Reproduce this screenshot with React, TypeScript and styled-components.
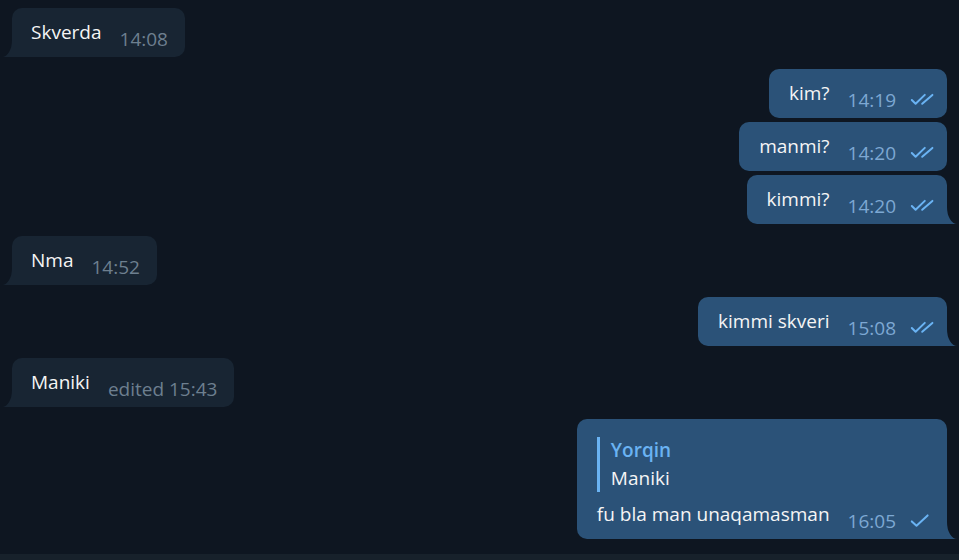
import React from 'react';
import styled, { createGlobalStyle, css } from 'styled-components';

const GlobalStyle = createGlobalStyle`
  html, body, #root {
    margin: 0;
    padding: 0;
    height: 100%;
  }
  body {
    background: #0e1621;
    font-family: "Open Sans", "Noto Sans", sans-serif;
    color: #f5f5f5;
    overflow: hidden;
  }
`;

type Side = 'in' | 'out';
type Status = 'read' | 'sent';

interface Message {
  id: number;
  side: Side;
  text: string;
  time: string;
  edited?: boolean;
  status?: Status;
  reply?: { name: string; text: string };
}

const groups: Message[][] = [
  [{ id: 1, side: 'in', text: 'Skverda', time: '14:08' }],
  [
    { id: 2, side: 'out', text: 'kim?', time: '14:19', status: 'read' },
    { id: 3, side: 'out', text: 'manmi?', time: '14:20', status: 'read' },
    { id: 4, side: 'out', text: 'kimmi?', time: '14:20', status: 'read' },
  ],
  [{ id: 5, side: 'in', text: 'Nma', time: '14:52' }],
  [{ id: 6, side: 'out', text: 'kimmi skveri', time: '15:08', status: 'read' }],
  [{ id: 7, side: 'in', text: 'Maniki', time: '15:43', edited: true }],
  [
    {
      id: 8,
      side: 'out',
      text: 'fu bla man unaqamasman',
      time: '16:05',
      status: 'sent',
      reply: { name: 'Yorqin', text: 'Maniki' },
    },
  ],
];

const colors = {
  inBubble: '#182533',
  outBubble: '#2b5278',
  inTime: '#6d7f8f',
  outTime: '#7da8d3',
  accent: '#6ab3f3',
};

const Layout = styled.div`
  display: flex;
  flex-direction: column;
  height: 100%;
`;

const Chat = styled.div`
  height: 554px;
  flex-shrink: 0;
  display: flex;
  flex-direction: column;
  gap: 12px;
  padding: 8px 12px 0;
  box-sizing: border-box;
  overflow: hidden;
`;

const Composer = styled.div`
  flex: 1;
  background: #17212b;
`;

const Group = styled.div`
  display: flex;
  flex-direction: column;
  gap: 4px;
`;

const Bubble = styled.div<{ $side: Side; $tail: boolean }>`
  position: relative;
  display: flex;
  flex-direction: column;
  padding: 10px ${(p) => (p.$side === 'in' ? 17 : 11)}px 0 ${(p) => (p.$side === 'in' ? 19 : 20)}px;
  border-radius: 10px;
  background: ${(p) => (p.$side === 'in' ? colors.inBubble : colors.outBubble)};
  align-self: ${(p) => (p.$side === 'in' ? 'flex-start' : 'flex-end')};
  ${(p) =>
    p.$tail &&
    (p.$side === 'in'
      ? css`
          border-bottom-left-radius: 0;
        `
      : css`
          border-bottom-right-radius: 0;
        `)}
`;

const TailSvg = styled.svg<{ $side: Side }>`
  position: absolute;
  bottom: 0;
  width: 10px;
  height: 17px;
  ${(p) => (p.$side === 'in' ? 'left: -10px;' : 'right: -10px;')}
`;

const Reply = styled.div`
  display: flex;
  flex-direction: column;
  margin: 8px 0 8px 0;
  padding-left: 11px;
  border-left: 3px solid ${colors.accent};
`;

const ReplyName = styled.div`
  font-size: 19px;
  line-height: 27.5px;
  font-weight: 600;
  color: ${colors.accent};
`;

const ReplyText = styled.div`
  font-size: 19px;
  line-height: 27.5px;
`;

const Row = styled.div`
  display: flex;
  align-items: flex-end;
`;

const Text = styled.div`
  font-size: 19px;
  line-height: 28px;
  padding-bottom: 11px;
  white-space: nowrap;
`;

const Meta = styled.div<{ $side: Side }>`
  display: flex;
  align-items: flex-end;
  margin: 0 0 9px auto;
  padding-left: ${(p) => (p.$side === 'in' ? 18 : 18)}px;
  color: ${(p) => (p.$side === 'in' ? colors.inTime : colors.outTime)};
`;

const Time = styled.span`
  display: block;
  font-size: 19px;
  line-height: 18px;
  white-space: nowrap;
`;

const Check = styled.svg`
  display: block;
  width: 26px;
  height: 12px;
  margin: 0 0 3px 14px;
  overflow: visible;
`;

const Tail = ({ side }: { side: Side }) => (
  <TailSvg $side={side} viewBox="0 0 10 17">
    {side === 'in' ? (
      <path d="M10 0 V17 H0 A10 17 0 0 0 10 0 Z" fill={colors.inBubble} />
    ) : (
      <path d="M0 0 V17 H10 A10 17 0 0 1 0 0 Z" fill={colors.outBubble} />
    )}
  </TailSvg>
);

const StatusIcon = ({ status }: { status: Status }) => (
  <Check viewBox="0 0 26 12" fill="none" stroke={colors.accent} strokeWidth={2} strokeLinecap="round" strokeLinejoin="round">
    {status === 'read' ? (
      <>
        <path d="M1.8 6 L5.6 9.8 L14.8 0.9" />
        <path d="M12.2 9.8 L22.4 0.9" />
      </>
    ) : (
      <path d="M1.8 6.4 L6.5 10.8 L17.6 0.4" />
    )}
  </Check>
);

const MessageBubble = ({ msg, tail }: { msg: Message; tail: boolean }) => (
  <Bubble $side={msg.side} $tail={tail}>
    {msg.reply && (
      <Reply>
        <ReplyName>{msg.reply.name}</ReplyName>
        <ReplyText>{msg.reply.text}</ReplyText>
      </Reply>
    )}
    <Row>
      <Text>{msg.text}</Text>
      <Meta $side={msg.side}>
        <Time>{msg.edited ? `edited ${msg.time}` : msg.time}</Time>
        {msg.status && <StatusIcon status={msg.status} />}
      </Meta>
    </Row>
    {tail && <Tail side={msg.side} />}
  </Bubble>
);

export default function App() {
  return (
    <>
      <GlobalStyle />
      <Layout>
        <Chat>
          {groups.map((group, gi) => (
            <Group key={gi}>
              {group.map((msg, i) => (
                <MessageBubble key={msg.id} msg={msg} tail={i === group.length - 1} />
              ))}
            </Group>
          ))}
        </Chat>
        <Composer />
      </Layout>
    </>
  );
}
